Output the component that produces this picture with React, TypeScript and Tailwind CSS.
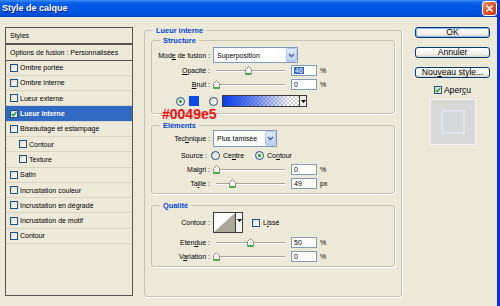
import type { ReactNode } from 'react'

const EFFECTS: { label: string; sub?: boolean; on?: boolean }[] = [
  { label: 'Ombre portée' },
  { label: 'Ombre interne' },
  { label: 'Lueur externe' },
  { label: 'Lueur interne', on: true },
  { label: 'Biseautage et estampage' },
  { label: 'Contour', sub: true },
  { label: 'Texture', sub: true },
  { label: 'Satin' },
  { label: 'Incrustation couleur' },
  { label: 'Incrustation en dégradé' },
  { label: 'Incrustation de motif' },
  { label: 'Contour' },
]

function Box({ checked = false }: { checked?: boolean }) {
  return (
    <span className="flex h-[8px] w-[8px] shrink-0 items-center justify-center border border-[#1c5180] bg-[linear-gradient(135deg,#dcdad0,#ffffff)]">
      {checked && (
        <svg width="6" height="6" viewBox="0 0 6 6">
          <path d="M0.8 3 L2.3 4.6 L5.3 1.2" fill="none" stroke="#21a121" strokeWidth="1.4" />
        </svg>
      )}
    </span>
  )
}

function Radio({ on = false }: { on?: boolean }) {
  return (
    <span className="flex h-[9px] w-[9px] shrink-0 items-center justify-center rounded-full border border-[#1c5180] bg-[linear-gradient(135deg,#dcdad0,#ffffff)]">
      {on && <span className="h-[3px] w-[3px] rounded-full bg-[#21a121]" />}
    </span>
  )
}

function Chevron() {
  return (
    <span className="ml-auto flex h-full w-[11px] items-center justify-center rounded-[2px] border border-[#b3c6f2] bg-[linear-gradient(#e1ebfe,#b9cdf8)]">
      <svg width="7" height="5" viewBox="0 0 7 5">
        <path d="M1 1 L3.5 3.5 L6 1" fill="none" stroke="#4d6185" strokeWidth="1.4" />
      </svg>
    </span>
  )
}

function Field({ value, selected = false }: { value: string; selected?: boolean }) {
  return (
    <div className="flex h-[11px] w-[26px] items-center border border-[#7f9db9] bg-white pl-[2px]">
      {selected ? <span className="bg-[#316ac5] px-[1px] text-white">{value}</span> : value}
    </div>
  )
}

function Slider({ at }: { at: number }) {
  return (
    <div className="relative h-[9px] w-[75px]">
      <div className="mx-[3px] mt-[4px] h-[2px] border-b border-white bg-[#a9a698]" />
      <svg className="absolute top-0" style={{ left: at }} width="7" height="9" viewBox="0 0 7 9">
        <path d="M0.5 3.5 L3.5 0.5 L6.5 3.5 V8.5 H0.5 Z" fill="#f6f5f0" stroke="#8d8d85" />
        <rect x="1" y="7" width="5" height="1.5" fill="#2cb52c" />
      </svg>
    </div>
  )
}

function Row({ label, children, className = '' }: { label: ReactNode; children: ReactNode; className?: string }) {
  return (
    <div className={`flex items-center ${className}`}>
      <span className="w-[58px] shrink-0 whitespace-nowrap text-right">{label}</span>
      <div className="ml-[3px] flex h-full items-center">{children}</div>
    </div>
  )
}

function SliderRow({ label, at, value, unit = '%', selected = false, className = '' }: { label: ReactNode; at: number; value: string; unit?: string; selected?: boolean; className?: string }) {
  return (
    <Row label={label} className={`h-[11px] ${className}`}>
      <Slider at={at} />
      <div className="ml-[3px]">
        <Field value={value} selected={selected} />
      </div>
      <span className="ml-[3px]">{unit}</span>
    </Row>
  )
}

function Legend({ children }: { children: ReactNode }) {
  return <legend className="ml-[8px] px-[3px] text-[7.4px] font-bold leading-[9px] text-[#0046d5]">{children}</legend>
}

function Btn({ children, primary = false }: { children: ReactNode; primary?: boolean }) {
  return (
    <div
      className={`flex h-[11px] w-[75px] items-center justify-center rounded-[3px] border border-[#003c74] bg-[linear-gradient(#ffffff,#f3f2ec_60%,#d9d6c9)] text-[8.6px] leading-none ${
        primary ? 'shadow-[inset_0_0_0_1px_#8fb2ea]' : ''
      }`}
    >
      {children}
    </div>
  )
}

export default function App() {
  return (
    <div className="h-[306px] w-[500px] overflow-hidden border-r-[3px] border-[#0a2fd6] bg-[#ece9d8] font-['Liberation_Sans',Arial,sans-serif] text-[7px] leading-none text-black">
      {/* title bar */}
      <div className="flex h-[17px] items-center justify-between bg-[linear-gradient(#3c8dfb_0%,#0a5fe8_18%,#0056e4_55%,#0050dc_85%,#0046c9_100%)] pl-[2px]">
        <span className="text-[9px] font-bold text-white [text-shadow:1px_1px_#0f1a8a]">Style de calque</span>
        <span className="flex h-[15px] w-[15px] items-center justify-center rounded-[3px] border border-white bg-[linear-gradient(135deg,#f09a7a,#e0542b_45%,#c73a14)]">
          <svg width="9" height="9" viewBox="0 0 9 9">
            <path d="M1.5 1.5 L7.5 7.5 M7.5 1.5 L1.5 7.5" stroke="#fff" strokeWidth="1.7" />
          </svg>
        </span>
      </div>

      <div className="flex items-start">
        {/* effects list */}
        <div className="ml-[5px] mt-[10px] flex h-[269px] w-[128px] flex-col border border-[#55554d]">
          <div className="flex h-[17px] shrink-0 items-center border-b-2 border-[#55554d] pb-[1px] pl-[4px]">Styles</div>
          <div className="flex h-[15.5px] shrink-0 items-center border-b border-[#55554d] pl-[4px]">
            Options de fusion : Personnalisées
          </div>
          {EFFECTS.map((e, i) => (
            <div
              key={i}
              className={`flex h-[15.3px] shrink-0 items-center gap-[2px] border-b border-[#d9d5c5] ${e.sub ? 'pl-[13px]' : 'pl-[4px]'} ${
                e.on ? 'bg-[#316ac5] font-bold text-white' : ''
              }`}
            >
              <Box checked={e.on} />
              <span>{e.label}</span>
            </div>
          ))}
        </div>

        {/* main group */}
        <fieldset className="relative ml-[11px] mt-[9px] h-[271px] w-[258px] rounded-[3px] border border-[#c6c3b3] shadow-[1px_1px_0_#ffffff]">
          <Legend>Lueur interne</Legend>

          <fieldset className="mx-[6px] mt-[1px] rounded-[3px] border border-[#c6c3b3] pb-[6px] pt-[2px] shadow-[1px_1px_0_#ffffff]">
            <Legend>Structure</Legend>
            <Row label={<>Mod<u>e</u> de fusion :</>} className="h-[16px]">
              <div className="flex h-[16px] w-[85px] items-center border border-[#7f9db9] bg-white pl-[3px]">
                Superposition
                <Chevron />
              </div>
            </Row>
            <SliderRow label={<><u>O</u>pacité :</>} at={32} value="46" selected className="mt-[2px]" />
            <SliderRow label={<><u>B</u>ruit :</>} at={0} value="0" className="mt-[3px]" />
            <div className="ml-[24px] mt-[5px] flex h-[12px] items-center">
              <Radio on />
              <span className="ml-[4px] h-[10px] w-[10px] bg-[#0a4be6]" />
              <span className="ml-[10px]">
                <Radio />
              </span>
              <div className="ml-[4px] flex h-[12px] w-[85px] border border-[#3c3c3c]">
                <div className="flex-1 bg-[image:repeating-conic-gradient(#cfcfcf_0_25%,#ffffff_0_50%)] bg-[length:4px_4px]">
                  <div className="h-full w-full bg-[linear-gradient(to_right,#0a3ce8,rgba(10,60,232,0.6)_40%,rgba(10,60,232,0)_88%)]" />
                </div>
                <div className="flex w-[7px] items-center justify-center border-l border-[#3c3c3c] bg-[#f0efe8]">
                  <svg width="5" height="3" viewBox="0 0 5 3">
                    <path d="M0 0 H5 L2.5 3 Z" fill="#000" />
                  </svg>
                </div>
              </div>
            </div>
          </fieldset>

          <fieldset className="mx-[6px] mt-[7px] rounded-[3px] border border-[#c6c3b3] pb-[4px] shadow-[1px_1px_0_#ffffff]">
            <Legend>Eléments</Legend>
            <Row label={<>Tec<u>h</u>nique :</>} className="h-[17px]">
              <div className="flex h-[17px] w-[64px] items-center border border-[#7f9db9] bg-white pl-[3px]">
                Plus tamisée
                <Chevron />
              </div>
            </Row>
            <div className="mt-[4px] flex h-[9px] items-center">
              <span className="w-[55px] shrink-0 text-right">Source :</span>
              <span className="ml-[4px]">
                <Radio />
              </span>
              <span className="ml-[3px]">
                Ce<u>n</u>tre
              </span>
              <span className="ml-[11px]">
                <Radio on />
              </span>
              <span className="ml-[3px]">
                Co<u>n</u>tour
              </span>
            </div>
            <SliderRow label="Maigri :" at={0} value="0" className="mt-[4px]" />
            <SliderRow label={<>Ta<u>i</u>lle :</>} at={16} value="49" unit="px" className="mt-[3px]" />
          </fieldset>

          <fieldset className="mx-[6px] mt-[7px] rounded-[3px] border border-[#c6c3b3] pb-[4px] pt-[2px] shadow-[1px_1px_0_#ffffff]">
            <Legend>Qualité</Legend>
            <Row label="Contour :" className="h-[21px]">
              <div className="flex h-[21px] w-[30px] border border-[#3c3c3c] bg-white">
                <svg width="21" height="19" viewBox="0 0 21 19">
                  <path d="M0 19 L21 0 L21 19 Z" fill="#aca899" />
                </svg>
                <div className="flex flex-1 justify-center border-l border-[#3c3c3c] bg-[#f4f3ee] pt-[6px]">
                  <svg width="5" height="3" viewBox="0 0 5 3">
                    <path d="M0 0 H5 L2.5 3 Z" fill="#000" />
                  </svg>
                </div>
              </div>
              <span className="ml-[9px] flex items-center gap-[3px]">
                <Box />
                <span>
                  L<u>i</u>ssé
                </span>
              </span>
            </Row>
            <SliderRow label={<>Eten<u>d</u>ue :</>} at={34} value="50" className="mt-[4px]" />
            <SliderRow label={<>V<u>a</u>riation :</>} at={0} value="0" className="mt-[3px]" />
          </fieldset>

          <span className="absolute left-[17px] top-[74px] text-[14px] font-bold leading-[10px] text-[#f20d0d]">#0049e5</span>
        </fieldset>

        {/* buttons */}
        <div className="ml-[13px] mt-[10px] flex w-[75px] flex-col items-center">
          <Btn primary>OK</Btn>
          <div className="mt-[9px]">
            <Btn>Annuler</Btn>
          </div>
          <div className="mt-[9px]">
            <Btn>
              <span>
                Nou<u>v</u>eau style...
              </span>
            </Btn>
          </div>
          <div className="mt-[8px] flex items-center gap-[2px] text-[8.6px]">
            <Box checked />
            <span>
              Aper<u>ç</u>u
            </span>
          </div>
          <div className="mt-[4px] flex h-[46px] w-[46px] items-center justify-center border border-[#f3f3f0] bg-[#d8d8d8]">
            <div className="h-[24px] w-[24px] border-2 border-[#dde2eb] bg-[#d6d7da]" />
          </div>
        </div>
      </div>
    </div>
  )
}
